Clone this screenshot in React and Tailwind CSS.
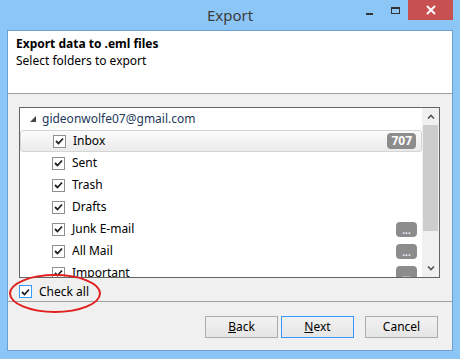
import React from "react";

const folders = [
  { name: "Inbox", badge: "707", selected: true },
  { name: "Sent" },
  { name: "Trash" },
  { name: "Drafts" },
  { name: "Junk E-mail", more: true },
  { name: "All Mail", more: true },
  { name: "Important", more: true },
];

const Check = ({ focus }) => (
  <span
    className={`flex h-[13px] w-[13px] shrink-0 items-center justify-center border bg-white ${
      focus ? "border-[#3399ff]" : "border-[#8f8f8f]"
    }`}
  >
    <svg width="9" height="8" viewBox="0 0 9 8">
      <path d="M1 4 L3.5 6.5 L8 1.5" fill="none" stroke="#222" strokeWidth="1.8" />
    </svg>
  </span>
);

const Btn = ({ children, primary }) => (
  <button
    className={`h-[22px] w-[73px] border bg-gradient-to-b from-[#f2f2f2] to-[#e5e5e5] text-[12px] text-black ${
      primary ? "border-[#3399ff]" : "border-[#acacac]"
    }`}
  >
    {children}
  </button>
);

export default function App() {
  return (
    <div
      className="flex h-[359px] w-[460px] flex-col bg-[#8cc6f6] px-[7px] pb-[8px]"
      style={{ fontFamily: '"Noto Sans", "Open Sans", sans-serif' }}
    >
      {/* title bar */}
      <div className="relative flex h-[30px] shrink-0 items-center justify-center">
        <span className="text-[15px] text-[#3c3c3c]">Export</span>
        <div className="absolute right-0 top-0 flex items-start">
          <div className="flex h-[20px] w-[26px] items-center justify-center">
            <span className="mt-[8px] block h-[2px] w-[7px] bg-[#333]" />
          </div>
          <div className="flex h-[20px] w-[26px] items-center justify-center">
            <span className="block h-[7px] w-[9px] border border-t-2 border-[#333]" />
          </div>
          <div className="flex h-[20px] w-[45px] items-center justify-center bg-[#c75050]">
            <svg width="10" height="10" viewBox="0 0 10 10">
              <path d="M1 1 L9 9 M9 1 L1 9" stroke="#fff" strokeWidth="2" />
            </svg>
          </div>
        </div>
      </div>

      {/* content */}
      <div className="relative flex flex-1 flex-col border border-[#6c9fd0] bg-[#f0f0f0] text-[12px] text-black">
        <div className="h-[63px] shrink-0 border-b border-[#a0a0a0] bg-white px-[8px] pt-[4px] leading-[17px]">
          <div className="font-bold">Export data to .eml files</div>
          <div>Select folders to export</div>
        </div>

        <div className="ml-[11px] mt-[13px] flex h-[171px] w-[421px] border border-[#646464] bg-white">
          <div className="flex flex-1 flex-col overflow-hidden">
            <div className="flex h-[22px] shrink-0 items-center pl-[10px]">
              <svg width="6" height="6" viewBox="0 0 6 6" className="mr-[6px]">
                <polygon points="6,0 6,6 0,6" fill="#444" />
              </svg>
              <span className="text-[#1e395b]">gideonwolfe07@gmail.com</span>
            </div>
            {folders.map((f) => (
              <div
                key={f.name}
                className={`flex h-[22px] shrink-0 items-center pl-[32px] pr-[5px] ${
                  f.selected
                    ? "rounded-[3px] border border-[#d5d5d5] bg-gradient-to-b from-[#fbfbfb] to-[#ebebeb] pl-[31px] pr-[4px]"
                    : ""
                }`}
              >
                <Check />
                <span className="ml-[7px] flex-1">{f.name}</span>
                {f.badge && (
                  <span className="rounded-[4px] bg-[#8c8c8c] px-[4px] text-[12px] font-bold leading-[16px] text-white">
                    {f.badge}
                  </span>
                )}
                {f.more && (
                  <span className="flex h-[15px] w-[21px] items-center justify-center rounded-[4px] bg-[#8c8c8c] pt-[1px] text-[10px] font-bold leading-[10px] text-[#e8f0ff]">
                    ...
                  </span>
                )}
              </div>
            ))}
          </div>
          {/* scrollbar */}
          <div className="flex w-[17px] shrink-0 flex-col bg-[#f0f0f0]">
            <div className="flex h-[17px] items-center justify-center">
              <svg width="8" height="5" viewBox="0 0 8 5">
                <path d="M1 4.5 L4 1.5 L7 4.5" fill="none" stroke="#555" strokeWidth="1.6" />
              </svg>
            </div>
            <div className="mx-px h-[106px] bg-[#cdcdcd]" />
            <div className="flex-1" />
            <div className="flex h-[17px] items-center justify-center">
              <svg width="8" height="5" viewBox="0 0 8 5">
                <path d="M1 0.5 L4 3.5 L7 0.5" fill="none" stroke="#555" strokeWidth="1.6" />
              </svg>
            </div>
          </div>
        </div>

        <div className="ml-[11px] mt-[7px] flex h-[13px] items-center">
          <Check focus />
          <span className="ml-[7px]">Check all</span>
        </div>

        <div className="mt-[3px] border-t border-[#a0a0a0]" />

        <div className="mt-[14px] flex justify-end pr-[14px]">
          <Btn>
            <u>B</u>ack
          </Btn>
          <span className="w-[3px]" />
          <Btn primary>
            <u>N</u>ext
          </Btn>
          <span className="w-[11px]" />
          <Btn>Cancel</Btn>
        </div>

        {/* annotation ellipse */}
        <div className="pointer-events-none absolute left-[1px] top-[243px] h-[39px] w-[92px] rounded-[50%] border-2 border-[#e0201f]" />
      </div>
    </div>
  );
}
